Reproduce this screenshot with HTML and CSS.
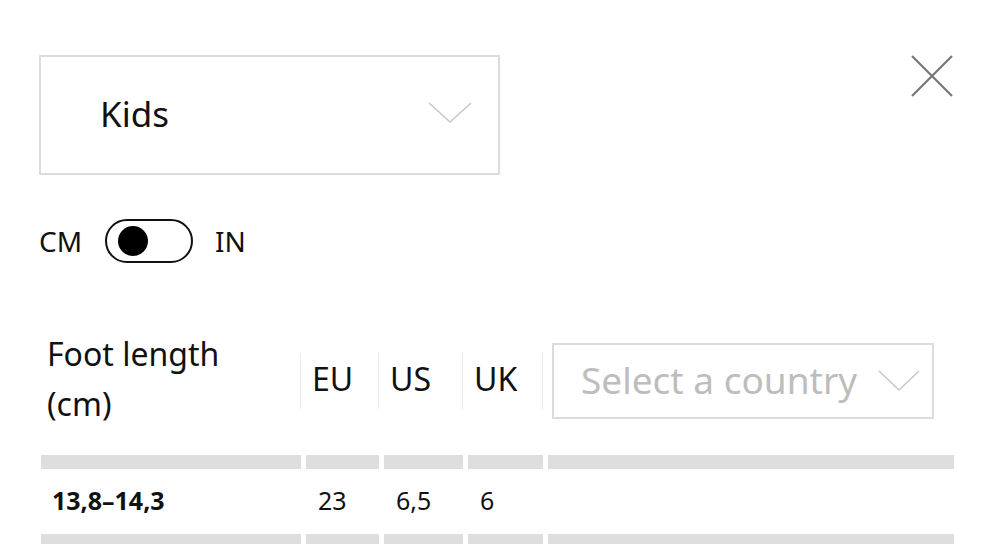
FILE: index.html
```html
<!DOCTYPE html>
<html lang="en">
<head>
<meta charset="utf-8">
<link rel="stylesheet" href="styles.css">
</head>
<body>
<div class="page">
  <div class="top">
    <div class="select-kids">
      <span class="kids-label">Kids</span>
      <svg class="chev" width="44" height="22" viewBox="0 0 44 22"><polyline points="1,1 22,20 43,1" fill="none" stroke="#c8c8c8" stroke-width="1.6"/></svg>
    </div>
    <svg class="close" width="42" height="42" viewBox="0 0 42 42"><path d="M1 1 L41 41 M41 1 L1 41" stroke="#777" stroke-width="2.2" fill="none"/></svg>
  </div>

  <div class="units">
    <span class="unit">CM</span>
    <span class="toggle"><span class="knob"></span></span>
    <span class="unit">IN</span>
  </div>

  <div class="table">
    <div class="head first">Foot length<br>(cm)</div>
    <div class="head sep">EU</div>
    <div class="head sep">US</div>
    <div class="head sep">UK</div>
    <div class="head sep country-cell">
      <div class="country">
        <span>Select a country</span>
        <svg width="42" height="22" viewBox="0 0 42 22"><polyline points="1,1 21,20 41,1" fill="none" stroke="#c8c8c8" stroke-width="1.6"/></svg>
      </div>
    </div>

    <div class="bar first-bar"></div><div class="bar first-bar"></div><div class="bar first-bar"></div><div class="bar first-bar"></div><div class="bar first-bar"></div>

    <div class="cell bold">13,8–14,3</div>
    <div class="cell">23</div>
    <div class="cell">6,5</div>
    <div class="cell">6</div>
    <div class="cell"></div>

    <div class="bar"></div><div class="bar"></div><div class="bar"></div><div class="bar"></div><div class="bar"></div>
  </div>
</div>
</body>
</html>
```

FILE: styles.css
```css
html, body {
  margin: 0;
  padding: 0;
  background: #fff;
}
body {
  font-family: "Noto Sans", "Open Sans", sans-serif;
  color: #111;
  width: 1000px;
  height: 544px;
  overflow: hidden;
}
.page {
  padding: 55px 0 0 39px;
}
.top {
  display: flex;
  align-items: flex-start;
  justify-content: space-between;
  padding-right: 47px;
}
.select-kids {
  box-sizing: border-box;
  width: 461px;
  height: 120px;
  border: 2px solid #dcdcdc;
  display: flex;
  align-items: center;
  justify-content: space-between;
  padding: 0 26px 0 59px;
}
.kids-label {
  font-size: 35px;
  line-height: 1;
  padding-bottom: 4px;
}
.chev {
  margin-bottom: 4px;
}
.units {
  display: flex;
  align-items: center;
  margin-top: 44px;
  height: 44px;
}
.unit {
  font-size: 28px;
  line-height: 1;
  color: #111;
}
.toggle {
  box-sizing: border-box;
  width: 88px;
  height: 44px;
  border: 2px solid #111;
  border-radius: 22px;
  margin: 0 22px 0 23px;
  display: flex;
  align-items: center;
  padding-left: 11px;
}
.knob {
  width: 30px;
  height: 30px;
  border-radius: 50%;
  background: #000;
}
.table {
  margin-top: 68px;
  margin-left: 2px;
  width: 913px;
  display: grid;
  grid-template-columns: 260px 73px 79px 75px 1fr;
  grid-template-rows: 100px auto auto auto;
  column-gap: 5px;
  align-items: center;
}
.head {
  font-size: 32px;
  line-height: 50px;
  padding-left: 6px;
}
.head.first {
  margin-top: -4px;
}
.head.sep {
  position: relative;
  margin-top: -4px;
}
.head.sep::before {
  content: "";
  position: absolute;
  left: -6px;
  top: -1px;
  height: 56px;
  border-left: 1px solid #eaeaea;
}
.country-cell {
  padding-left: 4px;
  padding-right: 20px;
  margin-top: 0 !important;
}
.head.country-cell::before {
  top: 10px;
}
.country {
  box-sizing: border-box;
  height: 76px;
  border: 2px solid #dcdcdc;
  display: flex;
  align-items: center;
  justify-content: space-between;
  padding: 0 12px 0 27px;
  color: #bdbdbd;
  font-size: 37px;
  line-height: 1;
}
.country span {
  padding-bottom: 4px;
}
.bar {
  height: 14px;
  background: #dedede;
}
.bar.first-bar {
  margin-top: 24px;
}
.cell {
  height: 65px;
  display: flex;
  align-items: center;
  padding-left: 12px;
  font-size: 25px;
  color: #111;
  padding-bottom: 4px;
  box-sizing: border-box;
}
.cell.bold {
  font-weight: 700;
  padding-left: 11px;
}
```
